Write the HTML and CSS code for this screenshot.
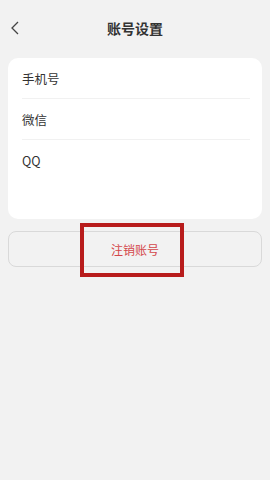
FILE: index.html
```html
<!DOCTYPE html>
<html lang="zh">
<head>
  <meta charset="UTF-8" />
  <meta name="viewport" content="width=device-width, initial-scale=1.0"/>
  <title>账号设置</title>
  <link rel="stylesheet" href="styles.css">
</head>
<body>

<div class="header">
  <span class="back">
    <svg width="10" height="14" viewBox="0 0 10 14">
      <path d="M8 1 L2 7 L8 13" fill="none" stroke="#444" stroke-width="1.3"/>
    </svg>
  </span>
  <h1>账号设置</h1>
</div>

<!-- 绑定账号列表 -->
<div class="card">
  <div class="row">手机号</div>
  <div class="row">微信</div>
  <div class="row last">QQ</div>
</div>

<div class="cancel-wrap">
  <button class="cancel-btn">注销账号</button>
  <div class="highlight"></div>
</div>

</body>
</html>
```

FILE: styles.css
```css
body {
  margin: 0;
  background-color: #f2f2f2;
  font-family: 'Noto Sans CJK SC', 'Liberation Sans', sans-serif;
  color: #333;
}

.header {
  position: relative;
  height: 56px;
  display: flex;
  justify-content: center;
  align-items: center;
}

.header h1 {
  margin: 0;
  font-size: 14px;
  font-weight: bold;
  color: #333;
}

.back {
  position: absolute;
  left: 10px;
  top: 21px;
  display: flex;
}

.card {
  margin: 2px 8px 0;
  background-color: #fff;
  border-radius: 10px;
  padding: 0 12px 39px 14px;
}

.row {
  height: 40px;
  display: flex;
  align-items: center;
  font-size: 12.5px;
  color: #333;
  border-bottom: 1px solid #f1f1f1;
}

.row.last {
  border-bottom: none;
}

.cancel-wrap {
  position: relative;
  margin: 4px 8px 0;
  padding: 8px 0 10px;
}

.cancel-btn {
  display: block;
  width: 100%;
  height: 36px;
  background-color: #f2f2f2;
  border: 1px solid #d9d9d9;
  border-radius: 8px;
  color: #d4474a;
  font-family: inherit;
  font-size: 12px;
}

.highlight {
  position: absolute;
  left: 72px;
  top: 0;
  bottom: 0;
  width: 96px;
  border: 4px solid #b81c1c;
}
```
